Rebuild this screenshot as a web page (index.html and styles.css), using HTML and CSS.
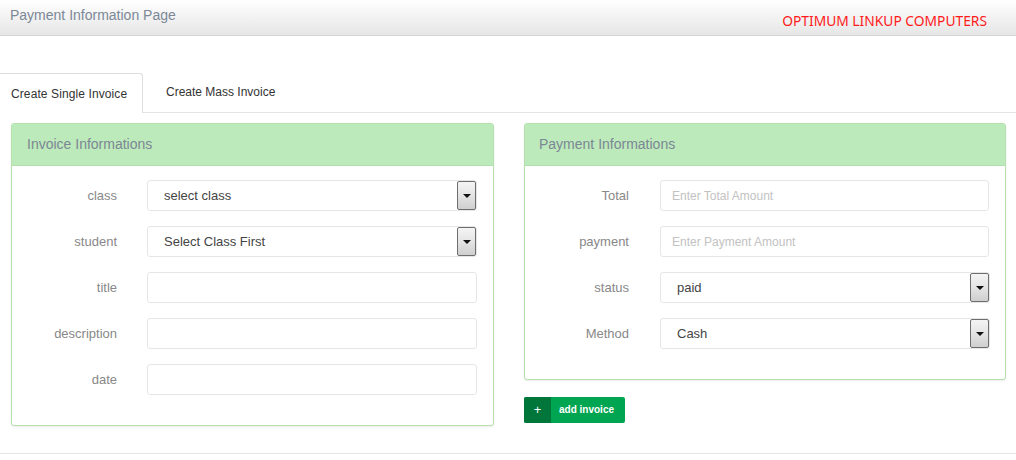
FILE: index.html
```html
<!DOCTYPE html>
<html>
<head>
<meta charset="utf-8">
<link rel="stylesheet" href="styles.css">
</head>
<body>
<header class="topbar">
  <div class="page-title">Payment Information Page</div>
  <div class="brand">OPTIMUM LINKUP COMPUTERS</div>
</header>

<nav class="tabs">
  <div class="tab tab-active">Create Single Invoice</div>
  <div class="tab tab-second">Create Mass Invoice</div>
</nav>

<main class="content">
  <section class="panel panel-left">
    <div class="panel-head">Invoice Informations</div>
    <div class="panel-body">
      <div class="row">
        <label class="lbl">class</label>
        <div class="select-wrap">
          <div class="field select">select class</div>
          <span class="arrow-btn"><span class="tri"></span></span>
        </div>
      </div>
      <div class="row">
        <label class="lbl">student</label>
        <div class="select-wrap">
          <div class="field select">Select Class First</div>
          <span class="arrow-btn"><span class="tri"></span></span>
        </div>
      </div>
      <div class="row">
        <label class="lbl">title</label>
        <input class="field" type="text">
      </div>
      <div class="row">
        <label class="lbl">description</label>
        <input class="field" type="text">
      </div>
      <div class="row">
        <label class="lbl">date</label>
        <input class="field" type="text">
      </div>
    </div>
  </section>

  <div class="right-col">
    <section class="panel panel-right">
      <div class="panel-head">Payment Informations</div>
      <div class="panel-body">
        <div class="row">
          <label class="lbl">Total</label>
          <input class="field ph" type="text" placeholder="Enter Total Amount">
        </div>
        <div class="row">
          <label class="lbl">payment</label>
          <input class="field ph" type="text" placeholder="Enter Payment Amount">
        </div>
        <div class="row">
          <label class="lbl">status</label>
          <div class="select-wrap">
            <div class="field select">paid</div>
            <span class="arrow-btn"><span class="tri"></span></span>
          </div>
        </div>
        <div class="row">
          <label class="lbl">Method</label>
          <div class="select-wrap">
            <div class="field select">Cash</div>
            <span class="arrow-btn"><span class="tri"></span></span>
          </div>
        </div>
      </div>
    </section>
    <button class="add-btn"><span class="add-icon">+</span><span class="add-text">add invoice</span></button>
  </div>
</main>

<div class="footer-line"></div>
</body>
</html>
```

FILE: styles.css
```css
html, body {
  margin: 0;
  padding: 0;
  background: #fff;
  font-family: "Liberation Sans", Arial, sans-serif;
  color: #333;
}

.topbar {
  height: 35px;
  border-bottom: 1px solid #d4d4d4;
  background: linear-gradient(to bottom, #ffffff 0%, #e6e6e6 100%);
  display: flex;
  justify-content: space-between;
  align-items: flex-start;
}

.page-title {
  font-size: 14px;
  color: #7c8897;
  padding: 7px 0 0 10px;
  line-height: 17px;
}

.brand {
  font-family: "Noto Sans", sans-serif;
  font-size: 13.8px;
  color: #ff1a1a;
  padding: 12px 29px 0 0;
  line-height: 18px;
}

.tabs {
  margin-top: 37px;
  height: 39px;
  border-bottom: 1px solid #e4e4e4;
  display: flex;
}

.tab {
  font-size: 12px;
  line-height: 39px;
  color: #333;
  height: 39px;
  box-sizing: border-box;
}

.tab-active {
  width: 143px;
  padding-left: 11px;
  border: 1px solid #dedede;
  border-left: none;
  border-bottom: none;
  border-radius: 0 3px 0 0;
  background: #fff;
  height: 40px;
  line-height: 40px;
  letter-spacing: 0.1px;
}

.tab-second {
  padding-left: 23px;
}

.content {
  display: flex;
  align-items: flex-start;
  padding: 10px 10px 0 11px;
  gap: 30px;
}

.panel {
  border: 1px solid #b6e1ae;
  border-radius: 3px;
  background: #fff;
  box-shadow: 0 1px 2px rgba(0,0,0,0.08);
  box-sizing: border-box;
}

.panel-left {
  width: 483px;
}

.right-col {
  width: 482px;
  display: flex;
  flex-direction: column;
  align-items: flex-start;
}

.panel-right {
  width: 482px;
}

.panel-head {
  background: #bdeabb;
  border-bottom: 1px solid #b2dfab;
  font-size: 14px;
  line-height: 40px;
  color: #7b8794;
  padding-left: 15px;
  box-sizing: border-box;
  height: 42px;
}

.panel-right .panel-head {
  padding-left: 14px;
}

.panel-body {
  padding: 14px 16px 15px 0;
}

.row {
  display: flex;
  align-items: center;
  margin-bottom: 15px;
}

.lbl {
  width: 105px;
  text-align: right;
  font-size: 13px;
  color: #888;
  padding-right: 30px;
  flex: none;
}

.panel-right .lbl {
  width: 104px;
  padding-right: 31px;
}

.field {
  width: 330px;
  height: 31px;
  box-sizing: border-box;
  border: 1px solid #e6e6e6;
  border-radius: 3px;
  padding: 0 0 0 11px;
  font-family: "Liberation Sans", Arial, sans-serif;
  font-size: 13px;
  color: #444;
  outline: none;
  background: #fff;
  margin: 0;
}

.ph::placeholder {
  color: #c2c2c2;
  font-size: 12px;
}

.select-wrap {
  position: relative;
  width: 330px;
  height: 31px;
}

.select {
  line-height: 29px;
  padding-left: 16px;
}

.arrow-btn {
  position: absolute;
  right: 1px;
  top: 1px;
  width: 19px;
  height: 29px;
  box-sizing: border-box;
  border: 1px solid #6e6e6e;
  border-radius: 2px;
  background: linear-gradient(to bottom, #f4f4f4 0%, #e6e6e6 45%, #cfcfcf 100%);
  display: flex;
  align-items: center;
  justify-content: center;
}

.tri {
  width: 0;
  height: 0;
  border-left: 4px solid transparent;
  border-right: 4px solid transparent;
  border-top: 4px solid #111;
  margin-top: 1px;
}

.add-btn {
  margin-top: 17px;
  height: 26px;
  width: 101px;
  padding: 0;
  border: none;
  border-radius: 2px;
  background: #00a551;
  display: flex;
  align-items: stretch;
  cursor: pointer;
  overflow: hidden;
}

.add-icon {
  width: 27px;
  background: #00763a;
  color: #fff;
  font-size: 13px;
  font-family: "Liberation Sans", Arial, sans-serif;
  line-height: 25px;
  text-align: center;
}

.add-text {
  flex: 1;
  color: #fff;
  font-size: 10px;
  font-weight: bold;
  font-family: "Liberation Sans", Arial, sans-serif;
  line-height: 26px;
  text-align: left;
  padding-left: 8px;
}

.footer-line {
  margin-top: 27px;
  border-top: 1px solid #e6e6e6;
}
```
